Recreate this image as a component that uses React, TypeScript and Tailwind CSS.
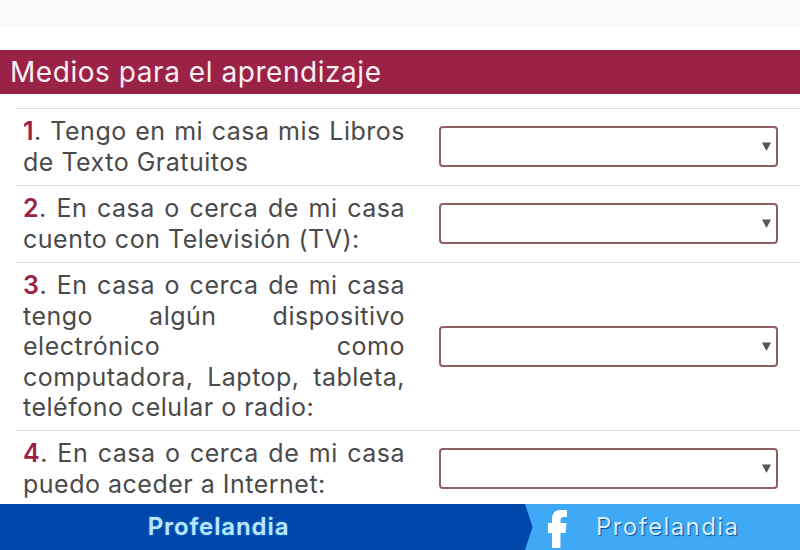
const rows = [
  { n: "1", h: "h-[77px]", lines: [". Tengo en mi casa mis Libros", "de Texto Gratuitos"] },
  { n: "2", h: "h-[77px]", lines: [". En casa o cerca de mi casa", "cuento con Televisión (TV):"] },
  { n: "3", h: "h-[168px]", lines: [". En casa o cerca de mi casa", "tengo algún dispositivo", "electrónico como", "computadora, Laptop, tableta,", "teléfono celular o radio:"] },
  { n: "4", h: "h-[77px]", lines: [". En casa o cerca de mi casa", "puedo aceder a Internet:"] },
];

function Row({ n, h, lines }: { n: string; h: string; lines: string[] }) {
  return (
    <div className={`flex shrink-0 items-center border-t border-[#dddddd] pl-[7px] pr-[22px] ${h}`}>
      <div className="w-[382px] text-[25px] leading-[30.6px] tracking-[0.5px] text-[#4a4a4a]">
        {lines.map((line, i) => {
          const last = i === lines.length - 1;
          return (
            <div key={i} className={last ? "whitespace-nowrap" : "whitespace-nowrap [text-align-last:justify]"}>
              {i === 0 && <span className="font-semibold text-[#9b2247]">{n}</span>}
              {line}
            </div>
          );
        })}
      </div>
      <div className="relative mb-[1px] ml-[34px] h-[41px] flex-1 rounded-[4px] border-2 border-[#8f5f63] bg-white">
        <svg viewBox="0 0 8 8" className="absolute right-[5px] top-[14px] h-[9px] w-[9px]">
          <path d="M0 0.5H8L4 8Z" fill="#555555" />
        </svg>
      </div>
    </div>
  );
}

export default function App() {
  return (
    <div className="flex h-[550px] w-[800px] flex-col overflow-hidden bg-white font-['Inter',sans-serif]">
      <div className="h-[26px] shrink-0 bg-[#fafafa]" />
      <div className="mt-[24px] flex h-[44px] shrink-0 items-center bg-[#9b2247] pl-[10px] text-[28px] tracking-[0.55px] text-[#fbeef2]">
        Medios para el aprendizaje
      </div>
      <div className="ml-[16px] mt-[14px] flex min-h-0 flex-1 flex-col overflow-hidden">
        {rows.map((r) => (
          <Row key={r.n} n={r.n} h={r.h} lines={r.lines} />
        ))}
      </div>
      <div className="flex h-[46px] shrink-0 bg-[#3fa9f5]">
        <div className="flex w-[525px] items-center justify-center bg-[#0047ab] pr-[88px]">
          <span className="text-[24px] font-semibold tracking-[0.9px] text-[#b9e6ff] [text-shadow:0_0_2px_#2f9be8]">
            Profelandia
          </span>
        </div>
        <svg viewBox="0 0 8 46" className="h-[46px] w-[8px] shrink-0">
          <path d="M0 0L7.5 23L0 46Z" fill="#0047ab" />
        </svg>
        <svg viewBox="0 0 19 38" className="ml-[15px] mt-[6px] h-[38px] w-[19px] shrink-0">
          <path d="M4 38V23H0V13H4V9C4 3 7.5 0 12 0H19V7H15.5C13.5 7 12.5 8 12.5 10V13H18.5L17.5 23H12.5V37Q12.5 38 11.5 38Z" fill="#ffffff" />
        </svg>
        <div className="ml-[29px] flex items-center">
          <span className="text-[24px] font-normal tracking-[1.4px] text-[#d5efff] [text-shadow:1px_1px_1px_#004a9f]">
            Profelandia
          </span>
        </div>
      </div>
    </div>
  );
}
